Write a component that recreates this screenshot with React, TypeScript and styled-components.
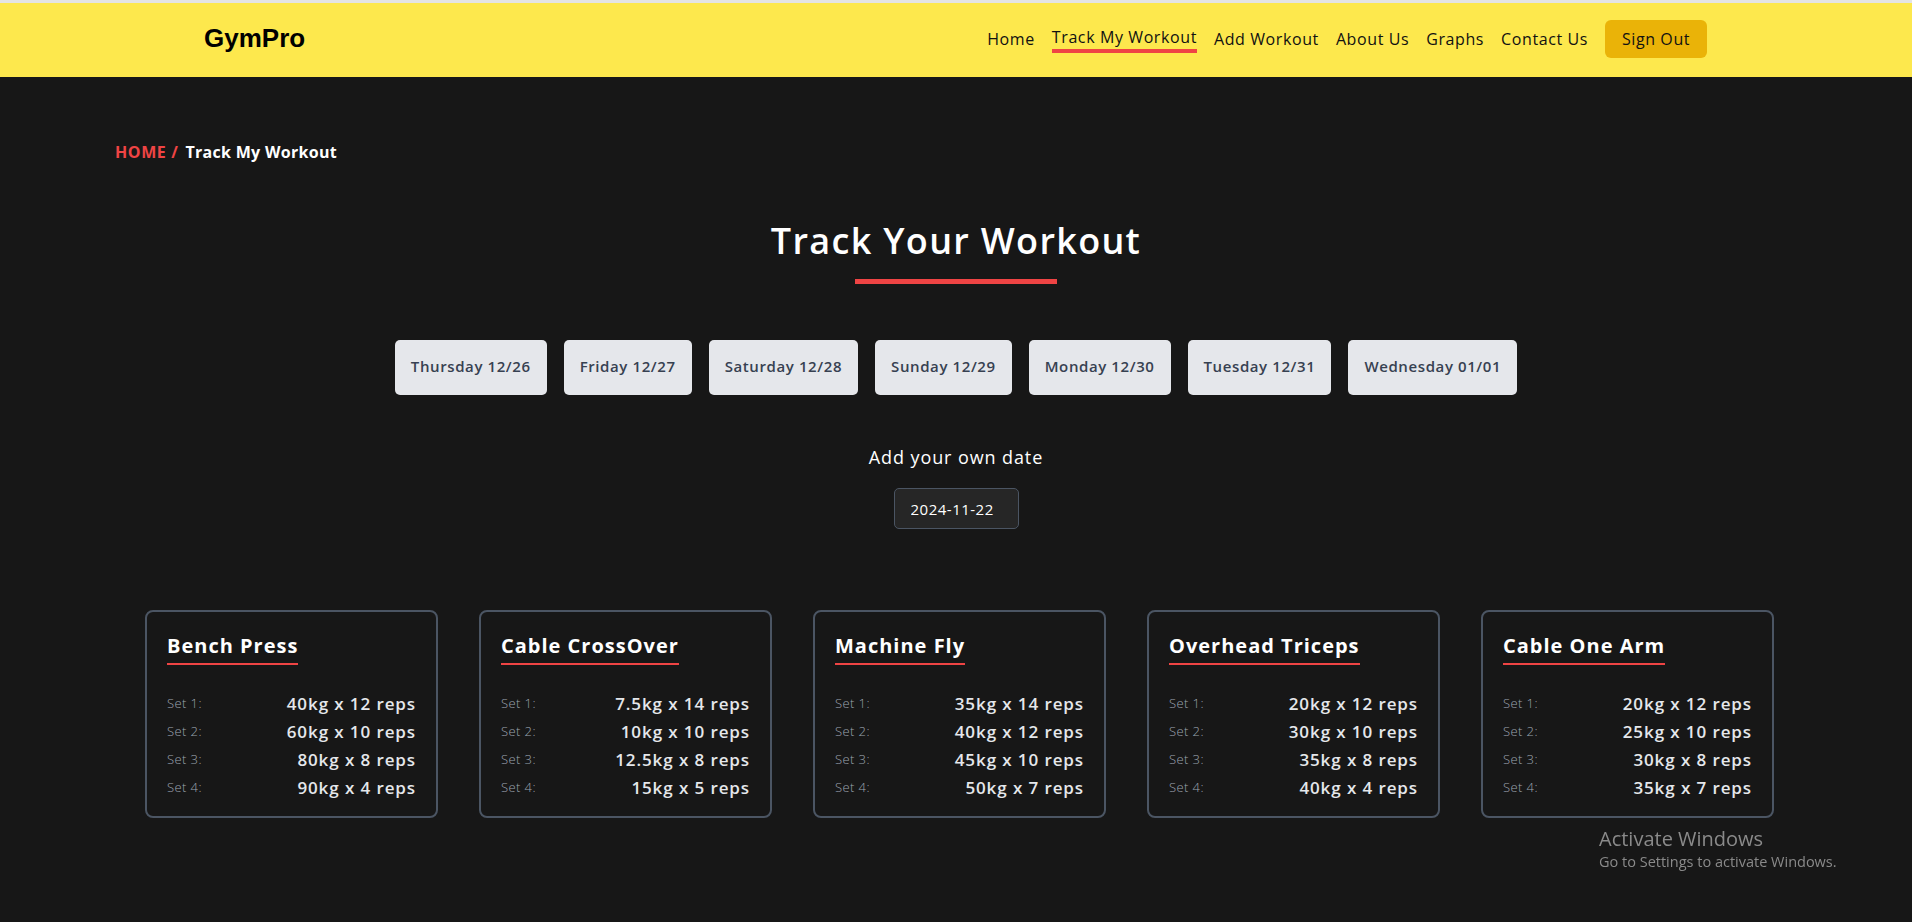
import React, { useState } from 'react';
import styled, { createGlobalStyle } from 'styled-components';

const GlobalStyle = createGlobalStyle`
  * { box-sizing: border-box; }
  body {
    margin: 0;
    background: #171717;
    font-family: "Open Sans", "DejaVu Sans", sans-serif;
    color: #ffffff;
  }
`;

const days = [
  'Thursday 12/26',
  'Friday 12/27',
  'Saturday 12/28',
  'Sunday 12/29',
  'Monday 12/30',
  'Tuesday 12/31',
  'Wednesday 01/01',
];

const workouts = [
  { name: 'Bench Press', sets: ['40kg x 12 reps', '60kg x 10 reps', '80kg x 8 reps', '90kg x 4 reps'] },
  { name: 'Cable CrossOver', sets: ['7.5kg x 14 reps', '10kg x 10 reps', '12.5kg x 8 reps', '15kg x 5 reps'] },
  { name: 'Machine Fly', sets: ['35kg x 14 reps', '40kg x 12 reps', '45kg x 10 reps', '50kg x 7 reps'] },
  { name: 'Overhead Triceps', sets: ['20kg x 12 reps', '30kg x 10 reps', '35kg x 8 reps', '40kg x 4 reps'] },
  { name: 'Cable One Arm', sets: ['20kg x 12 reps', '25kg x 10 reps', '30kg x 8 reps', '35kg x 7 reps'] },
];

const navLinks = ['Home', 'Track My Workout', 'Add Workout', 'About Us', 'Graphs', 'Contact Us'];

function App() {
  const [date, setDate] = useState('2024-11-22');

  return (
    <>
      <GlobalStyle />
      <Header>
        <Logo>GymPro</Logo>
        <Nav>
          {navLinks.map((l) => (
            <NavLink key={l} href="#" $active={l === 'Track My Workout'}>
              {l}
            </NavLink>
          ))}
          <SignOut>Sign Out</SignOut>
        </Nav>
      </Header>

      <Main>
        <Breadcrumb>
          <Crumb>HOME /</Crumb>
          <span>Track My Workout</span>
        </Breadcrumb>

        <Title>Track Your Workout</Title>
        <TitleBar />

        <DayRow>
          {days.map((d) => (
            <DayButton key={d}>{d}</DayButton>
          ))}
        </DayRow>

        <OwnDate>
          <OwnLabel>Add your own date</OwnLabel>
          <DateInput value={date} onChange={(e) => setDate(e.target.value)} />
        </OwnDate>

        <Cards>
          {workouts.map((w) => (
            <Card key={w.name}>
              <CardTitle>{w.name}</CardTitle>
              <Sets>
                {w.sets.map((s, i) => (
                  <SetRow key={i}>
                    <SetLabel>Set {i + 1}:</SetLabel>
                    <SetValue>{s}</SetValue>
                  </SetRow>
                ))}
              </Sets>
            </Card>
          ))}
        </Cards>
      </Main>

      <Watermark>
        <WmTitle>Activate Windows</WmTitle>
        <WmText>Go to Settings to activate Windows.</WmText>
      </Watermark>
    </>
  );
}

export default App;

const Header = styled.header`
  height: 77px;
  background: #fde84d;
  border-top: 3px solid #e4e4e4;
  padding: 0 205px 3px 204px;
  display: flex;
  align-items: center;
  justify-content: space-between;
`;

const Logo = styled.div`
  font-family: "Liberation Sans", Arial, sans-serif;
  font-size: 26px;
  font-weight: 700;
  color: #000;
`;

const Nav = styled.nav`
  display: flex;
  align-items: center;
  gap: 17px;
`;

const NavLink = styled.a<{ $active?: boolean }>`
  font-size: 16px;
  line-height: 24px;
  letter-spacing: 0.6px;
  color: #111;
  text-decoration: none;
  border-bottom: ${(p) => (p.$active ? '4px solid #ef4444' : 'none')};
`;

const SignOut = styled.button`
  font-family: inherit;
  font-size: 16px;
  line-height: 24px;
  letter-spacing: 0.6px;
  background: #eab308;
  color: #111;
  border: none;
  border-radius: 6px;
  padding: 7px 0;
  width: 102px;
`;

const Main = styled.main`
  display: flex;
  flex-direction: column;
  align-items: center;
  padding: 63px 0 80px;
`;

const Breadcrumb = styled.div`
  align-self: flex-start;
  margin-left: 115px;
  display: flex;
  gap: 7px;
  font-size: 16px;
  line-height: 24px;
  font-weight: 700;
  letter-spacing: 0.3px;
  color: #fff;
`;

const Crumb = styled.span`
  color: #ef4444;
  letter-spacing: 0.6px;
`;

const Title = styled.h1`
  margin: 57px 0 0;
  font-size: 36px;
  line-height: 40px;
  font-weight: 600;
  letter-spacing: 1.3px;
`;

const TitleBar = styled.div`
  width: 202px;
  height: 5px;
  background: #ef4444;
  margin-top: 18px;
`;

const DayRow = styled.div`
  display: flex;
  gap: 17px;
  margin-top: 56px;
`;

const DayButton = styled.button`
  font-family: inherit;
  background: #e5e7eb;
  color: #374151;
  border: none;
  border-radius: 5px;
  height: 55px;
  padding: 0 16px 4px;
  font-size: 15px;
  font-weight: 600;
  letter-spacing: 0.6px;
`;

const OwnDate = styled.div`
  display: flex;
  flex-direction: column;
  align-items: center;
  margin-top: 48px;
  gap: 17px;
`;

const OwnLabel = styled.div`
  font-size: 18px;
  line-height: 28px;
  font-weight: 400;
  letter-spacing: 0.9px;
  color: #ffffff;
`;

const DateInput = styled.input`
  font-family: inherit;
  width: 125px;
  height: 41px;
  background: #262626;
  border: 1px solid #4b5563;
  border-radius: 5px;
  color: #fff;
  font-size: 15px;
  letter-spacing: 0.5px;
  padding: 0 16px;
  outline: none;
`;

const Cards = styled.div`
  display: grid;
  grid-template-columns: repeat(5, 293px);
  gap: 41px;
  margin-top: 81px;
  padding-left: 7px;
`;

const Card = styled.div`
  border: 2px solid #4b5563;
  border-radius: 8px;
  padding: 20px 20px 15px;
  display: flex;
  flex-direction: column;
  align-items: flex-start;
`;

const CardTitle = styled.h3`
  margin: 0;
  font-size: 20px;
  line-height: 28px;
  font-weight: 700;
  letter-spacing: 1px;
  padding-bottom: 3px;
  border-bottom: 2px solid #ef4444;
`;

const Sets = styled.div`
  align-self: stretch;
  margin-top: 24px;
`;

const SetRow = styled.div`
  display: flex;
  justify-content: space-between;
  align-items: center;
  height: 28px;
`;

const SetLabel = styled.span`
  font-size: 13px;
  font-weight: 300;
  color: #9ca3af;
  letter-spacing: 0.4px;
`;

const SetValue = styled.span`
  font-size: 17px;
  font-weight: 600;
  color: #e5e7eb;
  letter-spacing: 0.9px;
`;

const Watermark = styled.div`
  position: fixed;
  left: 1599px;
  top: 826px;
  font-family: "Open Sans", "Noto Sans", sans-serif;
  color: #8a8a8a;
  pointer-events: none;
`;

const WmTitle = styled.div`
  font-size: 20px;
  line-height: 26px;
`;

const WmText = styled.div`
  font-size: 14.5px;
  line-height: 20px;
`;
